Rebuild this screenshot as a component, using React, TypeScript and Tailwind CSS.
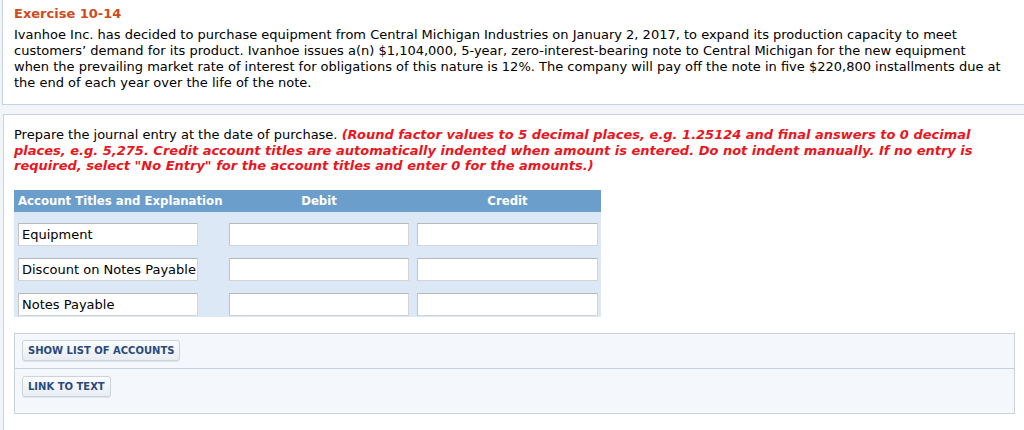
const font = { fontFamily: '"DejaVu Sans", Verdana, sans-serif' };
const condensed = { fontFamily: '"DejaVu Sans Condensed", "DejaVu Sans", Tahoma, sans-serif' };

const rows = ["Equipment", "Discount on Notes Payable", "Notes Payable"];

const Field = ({ value, className }: { value?: string; className?: string }) => (
  <div
    className={`h-[23px] bg-white border border-[#d4d4d4] border-t-[#b8b8b8] border-l-[#c4c4c4] pl-[3px] text-[13px] leading-[21px] text-black whitespace-nowrap overflow-hidden ${className ?? ""}`}
  >
    {value}
  </div>
);

const Btn = ({ label }: { label: string }) => (
  <button className="h-[21px] px-[5px] rounded-[3px] border border-[#cdd3db] bg-gradient-to-b from-[#fbfcfd] to-[#e9edf2] text-[10px] font-bold leading-[19px] text-[#2a4a7e] shadow-[0_1px_0_#dfe4ea]">
    {label}
  </button>
);

export default function App() {
  return (
    <div className="w-[1024px] h-[430px] bg-[#f1f5f9] pl-[2px] overflow-hidden" style={font}>
      <div className="bg-white border-l border-b border-[#c9d3de] pl-[11px] pt-[6px] pb-[13px]">
        <h2 className="text-[13px] leading-[16px] font-bold text-[#cf4a1c]">Exercise 10-14</h2>
        <p className="mt-[5px] text-[13px] leading-[16px] text-black whitespace-nowrap">
          Ivanhoe Inc. has decided to purchase equipment from Central Michigan Industries on January 2, 2017, to expand its production capacity to meet
          <br />
          customers’ demand for its product. Ivanhoe issues a(n) $1,104,000, 5-year, zero-interest-bearing note to Central Michigan for the new equipment
          <br />
          when the prevailing market rate of interest for obligations of this nature is 12%. The company will pay off the note in five $220,800 installments due at
          <br />
          the end of each year over the life of the note.
        </p>
      </div>

      <div className="mt-[9px] ml-[1px] h-[400px] bg-white border-l border-t border-b border-[#c9d3de] pl-[10px] pr-[9px] pt-[12px]">
        <p className="text-[13px] leading-[15.5px] text-black whitespace-nowrap">
          Prepare the journal entry at the date of purchase.{" "}
          <span className="font-bold italic text-[#ea1520]">
            (Round factor values to 5 decimal places, e.g. 1.25124 and final answers to 0 decimal
            <br />
            places, e.g. 5,275. Credit account titles are automatically indented when amount is entered. Do not indent manually. If no entry is
            <br />
            required, select "No Entry" for the account titles and enter 0 for the amounts.)
          </span>
        </p>

        <div className="mt-[16px] w-[587px]">
          <div
            className="h-[22px] bg-[#6b9ecb] flex text-white text-[13px] font-bold leading-[22px] whitespace-nowrap"
            style={condensed}
          >
            <span className="w-[215px] pl-[4px]">Account Titles and Explanation</span>
            <span className="w-[180px] text-center">Debit</span>
            <span className="w-[8px]" />
            <span className="w-[181px] text-center">Credit</span>
          </div>
          <div className="bg-[#dde8f6] pl-[4px] pr-[3px] pt-[11px] pb-[1px] flex flex-col gap-[12px]">
            {rows.map((r) => (
              <div key={r} className="flex">
                <Field value={r} className="w-[180px]" />
                <Field className="w-[180px] ml-[31px]" />
                <Field className="w-[181px] ml-[8px]" />
              </div>
            ))}
          </div>
        </div>

        <div className="mt-[16px] w-[1001px] border border-[#c9d1dc] bg-[#f4f7fb]">
          <div className="flex pl-[7px] pt-[6px] pb-[7px] border-b border-[#c9d1dc]">
            <Btn label="SHOW LIST OF ACCOUNTS" />
          </div>
          <div className="flex pl-[7px] pt-[7px] pb-[16px]">
            <Btn label="LINK TO TEXT" />
          </div>
        </div>
      </div>
    </div>
  );
}
